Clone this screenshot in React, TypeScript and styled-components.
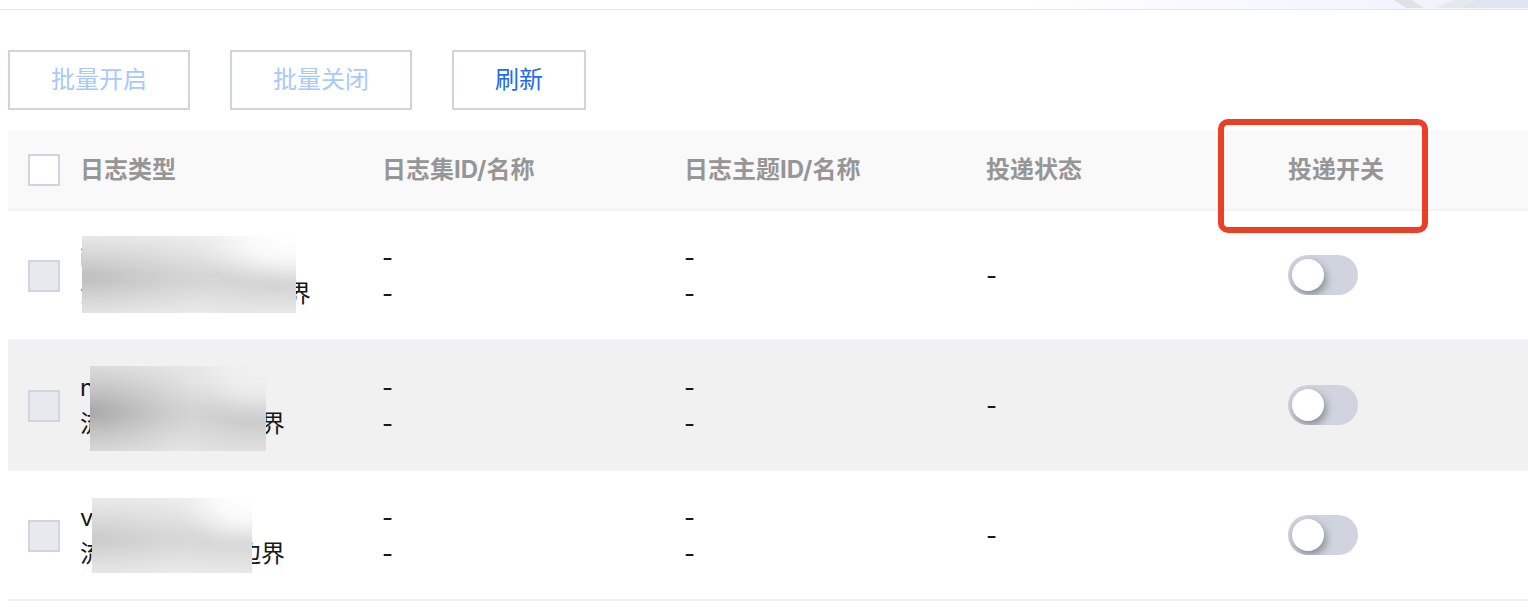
import React from "react";
import styled, { createGlobalStyle } from "styled-components";

const GlobalStyle = createGlobalStyle`
  *, *::before, *::after { box-sizing: border-box; }
  body {
    margin: 0;
    background: #fff;
    color: #181818;
    font-family: Inter, "Noto Sans CJK SC", sans-serif;
    font-size: 24px;
    line-height: 36px;
  }
`;

const Page = styled.div`
  overflow-x: clip;
`;

const Banner = styled.header`
  display: flex;
  justify-content: flex-end;
  height: 10px;
  border-bottom: 1px solid #e4e7ee;
  background: linear-gradient(90deg, #fff 66%, #f7f9ff 80%, #f2f5ff 90%);

  svg {
    display: block;
  }
`;

const Content = styled.main`
  padding: 40px 0 12px 8px;
`;

const Toolbar = styled.div`
  display: flex;
  gap: 40px;
  margin-bottom: 20px;
`;

const ToolButton = styled.button`
  height: 60px;
  padding: 0 41px;
  border: 2px solid #cfd4de;
  background: #fff;
  color: #2468f2;
  font: inherit;
  cursor: pointer;

  &:disabled {
    color: #a8c9fc;
    cursor: not-allowed;
  }
`;

const LogTable = styled.table`
  width: calc(100% + 62px);
  table-layout: fixed;
  border-collapse: separate;
  border-spacing: 0;
`;

const CheckCol = styled.col`
  width: 72px;
`;

const HeadCell = styled.th`
  position: relative;
  height: 81px;
  padding: 0;
  border-bottom: 2px solid #f2f2f8;
  background: #f9f9f9;
  color: #969696;
  font-weight: 700;
  text-align: left;
`;

const Highlight = styled.span`
  position: absolute;
  top: -11px;
  left: -70px;
  width: 210px;
  height: 114px;
  border: 6px solid #eb4026;
  border-radius: 10px;
  pointer-events: none;
`;

const Row = styled.tr<{ $active?: boolean }>`
  background: ${(p) => (p.$active ? "#f1f1f1" : "#fff")};
`;

const Cell = styled.td`
  height: 130px;
  padding: 0;
  border-bottom: 2px solid #f2f2f8;
  vertical-align: middle;
`;

const PaddedCell = styled(Cell)`
  padding-top: 2px;
`;

const Check = styled.input`
  appearance: none;
  display: block;
  width: 32px;
  height: 32px;
  margin: 0 0 0 20px;
  border: 2px solid #cfd4de;
  background: #fff;

  &:disabled {
    background: #e8e9ef;
  }
`;

const Switch = styled.input`
  appearance: none;
  display: block;
  width: 70px;
  height: 40px;
  margin: 0;
  padding: 4px;
  overflow: hidden;
  border-radius: 20px;
  background: #cfd4de;
  cursor: pointer;

  &::before {
    content: "";
    display: block;
    width: 32px;
    height: 32px;
    border-radius: 50%;
    background: #fff;
    box-shadow: 2px 4px 8px rgba(0, 0, 0, 0.36);
  }

  &:checked {
    background: #2468f2;
  }

  &:checked::before {
    margin-left: 30px;
  }
`;

const TypeName = styled.div<{ $width: number }>`
  position: relative;
  width: ${(p) => p.$width}px;
`;

const Line = styled.div`
  display: flex;
  justify-content: space-between;
`;

type Box = { left: number; top: number; width: number; height: number };

const Mask = styled.span<{ $box: Box; $base: string; $tone: string }>`
  position: absolute;
  left: ${(p) => p.$box.left}px;
  top: ${(p) => p.$box.top}px;
  width: ${(p) => p.$box.width}px;
  height: ${(p) => p.$box.height}px;
  background:
    radial-gradient(ellipse 44% 66% at 96% 4%, ${(p) => p.$base} 0%, ${(p) => p.$base}c0 40%, ${(p) => p.$base}30 80%, transparent 100%),
    linear-gradient(180deg, ${(p) => p.$base}80 0%, transparent 50%, transparent 60%, ${(p) => p.$base}70 100%),
    radial-gradient(ellipse 60% 90% at 0% 52%, ${(p) => p.$tone} 0%, transparent 100%),
    radial-gradient(ellipse 50% 60% at 92% 66%, ${(p) => p.$tone}60 0%, transparent 100%),
    #dadada;
`;

type Log = {
  first: string;
  start: string;
  end: string;
  width: number;
  mask: Box;
  base: string;
  tone: string;
  active?: boolean;
};

const logs: Log[] = [
  { first: "i", start: "流", end: "界", width: 231, mask: { left: 2, top: -4, width: 214, height: 77 }, base: "#ffffff", tone: "#c0c0c0" },
  { first: "n", start: "流", end: "界", width: 205, mask: { left: 10, top: -4, width: 176, height: 85 }, base: "#f1f1f1", tone: "#aaaaaa", active: true },
  { first: "v", start: "流", end: "边界", width: 205, mask: { left: 12, top: -2, width: 160, height: 75 }, base: "#ffffff", tone: "#cccccc" },
];

const Dashes = () => (
  <>
    <div>-</div>
    <div>-</div>
  </>
);

export default function App() {
  return (
    <Page>
      <GlobalStyle />
      <Banner>
        <svg width="134" height="8" viewBox="0 0 134 8" aria-hidden="true">
          <path d="M0 0H24L30 8H12Z" fill="#e0e3e6" />
          <path d="M18 0H60L42 8H30Z" fill="#f0f3f8" />
          <path d="M60 0H82L63 8H42Z" fill="#e5e9ed" />
          <path d="M82 0H134V8H63Z" fill="#dfe4ee" />
        </svg>
      </Banner>
      <Content>
        <Toolbar>
          <ToolButton type="button" disabled>批量开启</ToolButton>
          <ToolButton type="button" disabled>批量关闭</ToolButton>
          <ToolButton type="button">刷新</ToolButton>
        </Toolbar>
        <LogTable>
          <colgroup>
            <CheckCol />
            <col />
            <col />
            <col />
            <col />
            <col />
          </colgroup>
          <thead>
            <tr>
              <HeadCell scope="col">
                <Check type="checkbox" aria-label="全选" />
              </HeadCell>
              <HeadCell scope="col">日志类型</HeadCell>
              <HeadCell scope="col">日志集ID/名称</HeadCell>
              <HeadCell scope="col">日志主题ID/名称</HeadCell>
              <HeadCell scope="col">投递状态</HeadCell>
              <HeadCell scope="col">
                投递开关
                <Highlight />
              </HeadCell>
            </tr>
          </thead>
          <tbody>
            {logs.map((log, i) => (
              <Row key={i} $active={log.active}>
                <PaddedCell>
                  <Check type="checkbox" disabled aria-label={`选择第${i + 1}行`} />
                </PaddedCell>
                <PaddedCell>
                  <TypeName $width={log.width}>
                    <Line>{log.first}</Line>
                    <Line>
                      <span>{log.start}</span>
                      <span>{log.end}</span>
                    </Line>
                    <Mask $box={log.mask} $base={log.base} $tone={log.tone} />
                  </TypeName>
                </PaddedCell>
                <PaddedCell><Dashes /></PaddedCell>
                <PaddedCell><Dashes /></PaddedCell>
                <PaddedCell>-</PaddedCell>
                <Cell>
                  <Switch type="checkbox" role="switch" aria-label={`投递开关 ${i + 1}`} />
                </Cell>
              </Row>
            ))}
          </tbody>
        </LogTable>
      </Content>
    </Page>
  );
}
